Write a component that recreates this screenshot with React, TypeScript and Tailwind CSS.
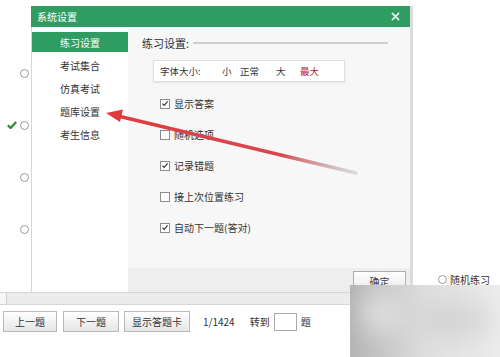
import React from "react";

const GREEN = "bg-[#2f9d62]";

function Radio() {
  return <span className="block h-[9px] w-[9px] rounded-full border border-[#9a9a9a] bg-white" />;
}

function Check({ checked }: { checked?: boolean }) {
  return (
    <span className="flex h-[10px] w-[10px] items-center justify-center border border-[#8c8c8c] bg-white">
      {checked && (
        <svg viewBox="0 0 10 10" className="h-[9px] w-[9px]">
          <path d="M1.8 5.2 L4 7.4 L8.3 2.3" fill="none" stroke="#333" strokeWidth="1.4" />
        </svg>
      )}
    </span>
  );
}

const navItems = ["考试集合", "仿真考试", "题库设置", "考生信息"];

const options = [
  { label: "显示答案", checked: true },
  { label: "随机选项", checked: false },
  { label: "记录错题", checked: true },
  { label: "接上次位置练习", checked: false },
  { label: "自动下一题(答对)", checked: true },
];

function ToolButton({ label, w }: { label: string; w: string }) {
  return (
    <button
      className={`${w} flex h-[21px] items-center justify-center border border-[#b9b9b9] bg-gradient-to-b from-white to-[#e6e6e6] text-[10px] text-[#333]`}
    >
      {label}
    </button>
  );
}

export default function App() {
  return (
    <div className="relative h-[357px] w-[500px] overflow-hidden bg-white font-['Noto_Sans_CJK_SC',sans-serif] text-[#333]">
      <div className="flex h-[292px]">
        {/* page radios to the left of the dialog */}
        <div className="flex w-[31px] flex-col gap-[42px] pt-[68px]">
          {[0, 1, 2, 3].map((i) => (
            <div key={i} className="flex h-[10px] items-center justify-end gap-[3px] pr-[2px]">
              {i === 1 && (
                <svg viewBox="0 0 10 8" className="h-[8px] w-[10px]">
                  <path d="M0.8 4.2 L3.6 7 L9.2 1" fill="none" stroke="#2a8a2a" strokeWidth="2.2" />
                </svg>
              )}
              <Radio />
            </div>
          ))}
        </div>

        {/* settings dialog */}
        <div className="mt-[6px] flex h-[286px] w-[382px] flex-col border-r-[3px] border-[#dcdcdc]">
          <div className={`${GREEN} flex h-[21px] items-center justify-between pl-[6px] pr-[10px] text-[10px] text-white`}>
            <span>系统设置</span>
            <svg viewBox="0 0 10 10" className="h-[9px] w-[9px]">
              <path d="M1 1 L9 9 M9 1 L1 9" stroke="#e8f5ec" strokeWidth="1.8" />
            </svg>
          </div>
          <div className="flex flex-1">
            <div className="w-[97px] border-l border-[#d6d6d6] bg-white pt-[5px] text-[10px]">
              <div className={`${GREEN} mb-[2px] flex h-[20px] items-center justify-center text-white`}>练习设置</div>
              {navItems.map((n) => (
                <div key={n} className="flex h-[23px] items-center justify-center">
                  {n}
                </div>
              ))}
            </div>
            <div className="flex flex-1 flex-col">
              <div className="flex-1 bg-[#f7f7f7]">
                <div className="mt-[9px] flex h-[14px] items-center pl-[14px] text-[11px]">
                  <span>练习设置:</span>
                  <span className="ml-[4px] mr-[22px] h-[2px] flex-1 bg-[#d0d0d0]" />
                </div>
                <div className="ml-[25px] mt-[10px] flex h-[22px] w-[192px] items-center border border-[#dedede] bg-white pl-[6px] text-[9.5px] shadow-[0_1px_2px_rgba(0,0,0,0.08)]">
                  <span className="w-[62px]">字体大小:</span>
                  <span className="w-[18px]">小</span>
                  <span className="w-[36px]">正常</span>
                  <span className="w-[24px]">大</span>
                  <span className="text-[#c0182a]">最大</span>
                </div>
                <div className="ml-[32px] mt-[6px] text-[10px]">
                  {options.map((o) => (
                    <div key={o.label} className="flex h-[31px] items-center gap-[4px]">
                      <Check checked={o.checked} />
                      <span>{o.label}</span>
                    </div>
                  ))}
                </div>
              </div>
              <div className="flex h-[24px] justify-end bg-[#eeeeee] pr-[4px] pt-[3px]">
                <button className="flex h-[21px] w-[53px] items-center justify-center border border-[#adadad] bg-gradient-to-b from-white to-[#e9e9e9] text-[10px]">
                  确定
                </button>
              </div>
            </div>
          </div>
        </div>

        <div className="flex flex-1 items-end pb-[5px] pl-[25px] text-[10px]">
          <div className="flex items-center gap-[3px]">
            <Radio />
            <span>随机练习</span>
          </div>
        </div>
      </div>

      {/* horizontal scrollbar */}
      <div className="flex h-[13px] border-y border-[#d6d6d6] bg-[#ececec]">
        <span className="w-[7px] border-r border-[#cfcfcf] bg-[#f6f6f6]" />
      </div>

      {/* bottom toolbar */}
      <div className="flex items-center pl-[3px] pt-[6px] text-[10px]">
        <ToolButton label="上一题" w="w-[54px]" />
        <span className="w-[6px]" />
        <ToolButton label="下一题" w="w-[56px]" />
        <span className="w-[5px]" />
        <ToolButton label="显示答题卡" w="w-[66px]" />
        <span className="ml-[13px]">1/1424</span>
        <span className="ml-[15px]">转到</span>
        <span className="ml-[4px] h-[18px] w-[23px] border border-[#aaa] bg-white" />
        <span className="ml-[4px]">题</span>
      </div>

      {/* blurred watermark in the corner */}
      <div className="absolute left-[350px] top-[285px] h-[72px] w-[150px] bg-gradient-to-r from-[#b4b4b4] via-[#dedede] to-[#ececec]">
        <div className="absolute left-[10px] top-[8px] h-[40px] w-[40px] rounded-full bg-[#f0f0f0] opacity-60 blur-md" />
        <div className="absolute left-[70px] top-[20px] h-[30px] w-[70px] rounded-full bg-[#c8c8c8] opacity-60 blur-md" />
      </div>

      {/* red annotation arrow */}
      <svg className="pointer-events-none absolute inset-0" width="500" height="357">
        <defs>
          <linearGradient id="arr" x1="107" y1="113" x2="356" y2="173" gradientUnits="userSpaceOnUse">
            <stop offset="0" stopColor="#e03a3e" />
            <stop offset="0.7" stopColor="#d8484c" />
            <stop offset="1" stopColor="#b0b0b0" stopOpacity="0.4" />
          </linearGradient>
        </defs>
        <line x1="118" y1="116" x2="356" y2="173" stroke="url(#arr)" strokeWidth="3.4" strokeLinecap="round" />
        <polygon points="106,113 123,109.5 120,122" fill="#e03a3e" />
      </svg>
    </div>
  );
}
